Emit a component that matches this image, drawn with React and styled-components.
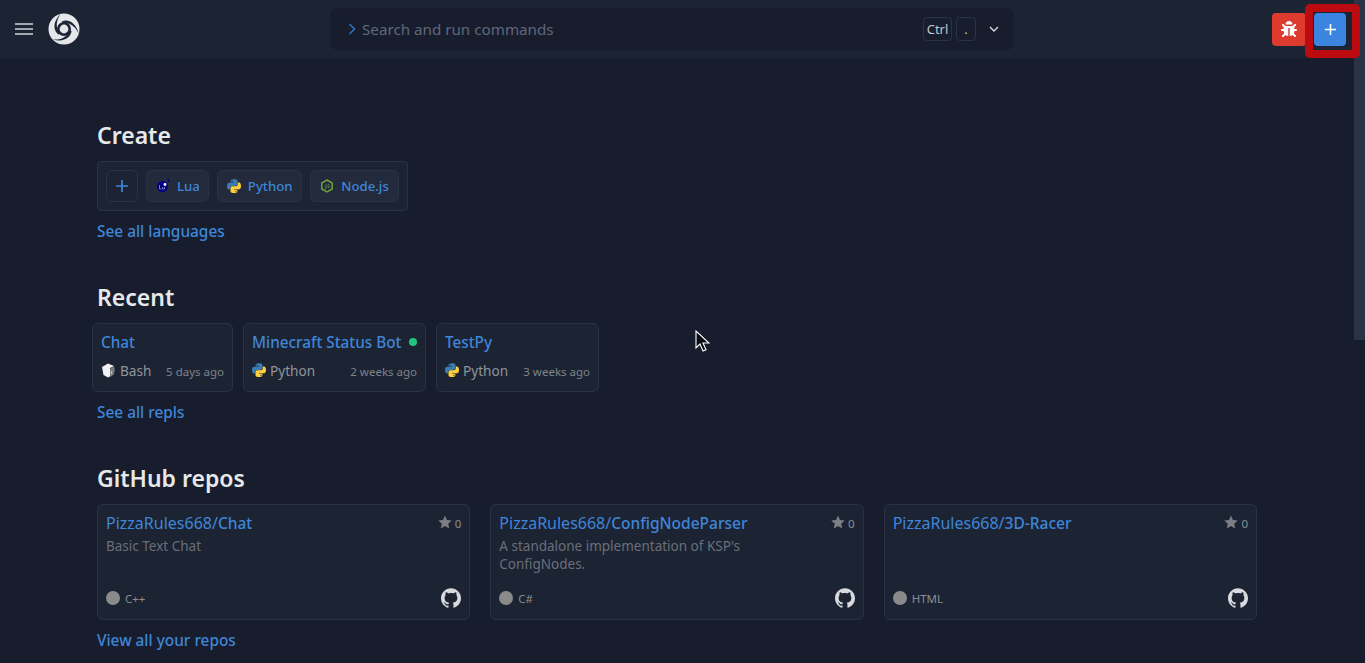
import React from "react";
import styled, { createGlobalStyle } from "styled-components";
import { FaBug } from "react-icons/fa";
import { SiGithub } from "react-icons/si";

const Global = createGlobalStyle`
  html, body { margin: 0; padding: 0; background: #171d2d; height: 663px; overflow: hidden; }
  body { font-family: "Noto Sans", "Open Sans", sans-serif; color: #f5f9fc; }
  a { text-decoration: none; }
`;

const Page = styled.div`
  position: relative;
  width: 1365px;
  height: 663px;
  overflow: hidden;
`;
const Header = styled.header`
  width: 1354px;
  height: 58px;
  background: #1c2333;
  display: grid;
  grid-template-columns: 315px 684px 1fr;
  align-items: center;
  box-sizing: border-box;
  padding: 0 8px 0 15px;
`;
const HeaderLeft = styled.div`
  display: flex;
  align-items: center;
  gap: 15px;
`;
const HeaderRight = styled.div`
  display: flex;
  justify-content: flex-end;
  align-items: center;
  gap: 8px;
`;
const Burger = styled.svg`
  width: 18px;
  height: 12px;
  display: block;
`;
const Search = styled.div`
  height: 42px;
  background: #171d2d;
  border-radius: 8px;
  display: flex;
  align-items: center;
  padding: 0 12px 0 18px;
`;
const Placeholder = styled.span`
  flex: 1;
  margin-left: 6px;
  font-size: 15.2px;
  color: #5f677a;
`;
const Key = styled.span`
  height: 24px;
  width: ${(p) => p.$w}px;
  box-sizing: border-box;
  display: flex;
  align-items: center;
  justify-content: center;
  border: 1px solid #2b3245;
  border-radius: 4px;
  font-size: 13px;
  color: #c2c8cc;
  margin-right: 4px;
`;
const KeyChevron = styled.svg`
  width: 12px;
  height: 12px;
  margin-left: 8px;
  margin-right: 2px;
`;
const ActionButton = styled.button`
  width: ${(p) => p.$w}px;
  height: 33px;
  border: 0;
  padding: 0;
  border-radius: 4px;
  background: ${(p) => p.$bg};
  color: #fff;
  display: flex;
  align-items: center;
  justify-content: center;
`;

const Main = styled.main`
  width: 1160px;
  margin: 0 auto;
  position: relative;
  left: -5.5px;
  padding-top: 62px;
`;
const Section = styled.section`
  margin-bottom: ${(p) => p.$mb}px;
`;
const Title = styled.h2`
  margin: 0 0 10px;
  font-size: 23px;
  line-height: 31px;
  font-weight: 600;
  color: #e6e8ea;
`;
const LinkLine = styled.a`
  display: block;
  margin-top: 10px;
  font-size: 15.4px;
  line-height: 21px;
  font-weight: 500;
  color: #3f86d8;
`;
const CreatePanel = styled.div`
  display: inline-flex;
  align-items: center;
  gap: 8px;
  height: 50px;
  box-sizing: border-box;
  padding: 0 8px;
  background: #1c2333;
  border: 1px solid #2b3245;
  border-radius: 4px;
  vertical-align: top;
`;
const CreateRow = styled.div`
  height: 50px;
`;
const Chip = styled.button`
  height: 32px;
  box-sizing: border-box;
  padding: 0 ${(p) => (p.$square ? 0 : 8)}px 0 ${(p) => (p.$square ? 0 : 9)}px;
  width: ${(p) => (p.$w ? `${p.$w}px` : "auto")};
  background: ${(p) => (p.$square ? "transparent" : "#232a3b")};
  border: 1px solid #2b3245;
  border-radius: 6px;
  display: flex;
  align-items: center;
  justify-content: center;
  gap: 7px;
  color: #3f86d8;
  font-family: inherit;
  font-size: 13.2px;
  font-weight: 500;
`;
const RecentRow = styled.div`
  display: flex;
  gap: 10px;
  margin-left: -5px;
`;
const ReplCard = styled.div`
  width: ${(p) => p.$w}px;
  height: 69px;
  box-sizing: border-box;
  padding: 7px 8px 0;
  background: #1c2333;
  border: 1px solid #2b3245;
  border-radius: 6px;
`;
const ReplTop = styled.div`
  display: flex;
  align-items: center;
  justify-content: space-between;
  height: 21px;
`;
const ReplName = styled.a`
  font-size: 15.3px;
  font-weight: 500;
  color: #3f86d8;
  white-space: nowrap;
`;
const Dot = styled.span`
  width: 8px;
  height: 8px;
  border-radius: 50%;
  background: #1fc77e;
`;
const ReplBottom = styled.div`
  display: flex;
  align-items: center;
  margin-top: 8px;
  height: 20px;
`;
const Lang = styled.span`
  font-size: 13.6px;
  color: #8f949a;
  margin-left: 4px;
  flex: 1;
  white-space: nowrap;
`;
const Ago = styled.span`
  font-size: 11.5px;
  color: #7f8489;
  white-space: nowrap;
  padding-top: 3px;
`;
const RepoGrid = styled.div`
  display: grid;
  grid-template-columns: repeat(3, 1fr);
  gap: 20px;
`;
const RepoCard = styled.div`
  height: 116px;
  box-sizing: border-box;
  padding: 8px;
  background: #1c2333;
  border: 1px solid #2b3245;
  border-radius: 6px;
  display: flex;
  flex-direction: column;
`;
const RepoTop = styled.div`
  display: flex;
  justify-content: space-between;
  align-items: center;
  height: 20px;
`;
const RepoName = styled.a`
  font-size: 16px;
  color: #3f86d8;
  white-space: nowrap;
  b { font-size: 15.5px; font-weight: 500; }
`;
const Stars = styled.span`
  display: flex;
  align-items: center;
  gap: 3px;
  font-size: 11.5px;
  color: #8a8f94;
  svg { margin-top: -2px; }
`;
const Desc = styled.p`
  margin: 4px 0 0;
  width: 290px;
  flex: 1;
  font-size: 13.5px;
  line-height: 18px;
  color: #6a6f78;
`;
const RepoBottom = styled.div`
  display: flex;
  justify-content: space-between;
  align-items: center;
  height: 20px;
  margin-bottom: 3px;
`;
const RepoLang = styled.span`
  display: flex;
  align-items: center;
  gap: 5px;
  font-size: 11.5px;
  color: #8a8f94;
`;
const LangDot = styled.span`
  width: 14px;
  height: 14px;
  border-radius: 50%;
  background: #8a8a8a;
`;
const ScrollThumb = styled.div`
  position: absolute;
  top: 0;
  right: 0;
  width: 11px;
  height: 340px;
  background: #2b3245;
`;
const Annotation = styled.div`
  position: absolute;
  left: 1305px;
  top: 4px;
  width: 55px;
  height: 54px;
  box-sizing: border-box;
  border: 8px solid #bb0a10;
  border-radius: 5px;
`;
const Cursor = styled.svg`
  position: absolute;
  left: 695px;
  top: 330px;
  width: 15px;
  height: 23px;
`;

const Plus = ({ size = 14, color = "currentColor" }) => (
  <svg width={size} height={size} viewBox="0 0 14 14" fill="none" stroke={color} strokeWidth="1.7">
    <path d="M7 1v12M1 7h12" />
  </svg>
);
const Logo = () => (
  <svg width="32" height="32" viewBox="0 0 32 32">
    <circle cx="16" cy="16" r="15.5" fill="#e4e6e9" />
    <circle cx="16" cy="16" r="7" fill="#1c2333" />
    {[0, 120, 240].map((a) => (
      <path
        key={a}
        transform={`rotate(${a} 16 16)`}
        d="M14 8.4C20 5.8 28 9.5 30.6 20.5C27 12.5 21 9.6 14 9.6Z"
        fill="#1c2333"
      />
    ))}
    <circle cx="16" cy="16" r="4.4" fill="#e4e6e9" />
  </svg>
);
const PyIcon = ({ size = 14 }) => (
  <svg width={size} height={size} viewBox="0 0 110 110">
    <path
      fill="#3d7cb0"
      d="M54.9 1c-28 0-26.2 12.1-26.2 12.1l0 12.6h26.7v3.8H18.1S0 27.4 0 55.9s15.8 27.5 15.8 27.5h9.4V70.2s-.5-15.8 15.5-15.8h26.7s15 .2 15-14.5V15.6S84.7 1 54.9 1zM40 9.5a4.8 4.8 0 1 1 0 9.6 4.8 4.8 0 0 1 0-9.6z"
    />
    <path
      fill="#fdd13d"
      transform="rotate(180 55 55.5)"
      d="M54.9 1c-28 0-26.2 12.1-26.2 12.1l0 12.6h26.7v3.8H18.1S0 27.4 0 55.9s15.8 27.5 15.8 27.5h9.4V70.2s-.5-15.8 15.5-15.8h26.7s15 .2 15-14.5V15.6S84.7 1 54.9 1zM40 9.5a4.8 4.8 0 1 1 0 9.6 4.8 4.8 0 0 1 0-9.6z"
    />
  </svg>
);
const LuaIcon = () => (
  <svg width="14" height="14" viewBox="0 0 14 14">
    <circle cx="6.5" cy="7.5" r="5.5" fill="#000080" />
    <circle cx="9" cy="5.5" r="1.4" fill="#fff" />
    <circle cx="12.5" cy="1.5" r="1.2" fill="#000080" />
    <path d="M3.5 6v4h2M6.5 8v2h2V8" fill="none" stroke="#aab" strokeWidth=".7" />
  </svg>
);
const NodeIcon = () => (
  <svg width="14" height="14" viewBox="0 0 14 14">
    <path d="M7 1l5.2 3v6L7 13l-5.2-3V4z" fill="none" stroke="#6da13f" strokeWidth="1.5" />
    <path d="M6 5.5v3.6c0 .8-1 .8-1.3.3M9.4 6c-.5-.6-1.7-.5-1.7.3s1.8.6 1.8 1.5-1.4 1-2 .3" fill="none" stroke="#6da13f" strokeWidth=".8" />
  </svg>
);
const BashIcon = () => (
  <svg width="15" height="15" viewBox="0 0 15 15">
    <path d="M1 4l6-3.5L13 3v8l-6 3.5L2.5 12z" fill="#f2f2f2" />
    <path d="M9 5l4-2v8l-4 3z" fill="#3a3f4a" />
    <path d="M13 3.5c1.3 2.5 1 6-1 8.5l-3 2V6z" fill="#c8c9cc" opacity=".45" />
    <path d="M10.4 8v3" stroke="#ddd" strokeWidth=".7" />
  </svg>
);
const StarIcon = () => (
  <svg width="14" height="14" viewBox="0 0 24 24" fill="#7c7f86">
    <path d="M12 1l3.4 7.5 8.1.9-6 5.5 1.7 8.1L12 18.9l-7.2 4.1 1.7-8.1-6-5.5 8.1-.9z" />
  </svg>
);

const repls = [
  { name: "Chat", lang: "Bash", ago: "5 days ago", w: 141, icon: <BashIcon /> },
  { name: "Minecraft Status Bot", lang: "Python", ago: "2 weeks ago", w: 183, live: true, icon: <PyIcon /> },
  { name: "TestPy", lang: "Python", ago: "3 weeks ago", w: 163, icon: <PyIcon /> },
];
const repos = [
  { name: "Chat", desc: "Basic Text Chat", lang: "C++" },
  { name: "ConfigNodeParser", desc: "A standalone implementation of KSP's ConfigNodes.", lang: "C#" },
  { name: "3D-Racer", desc: "", lang: "HTML" },
];

export default function App() {
  return (
    <Page>
      <Global />
      <Header>
        <HeaderLeft>
          <Burger viewBox="0 0 18 12" fill="#a3a7b0">
            <rect y="0" width="18" height="2" />
            <rect y="5" width="18" height="2" />
            <rect y="10" width="18" height="2" />
          </Burger>
          <Logo />
        </HeaderLeft>
        <Search>
          <svg width="8" height="12" viewBox="0 0 8 12" fill="none" stroke="#2f6fc0" strokeWidth="1.6">
            <path d="M1.5 1l5 5-5 5" />
          </svg>
          <Placeholder>Search and run commands</Placeholder>
          <Key $w={29}>Ctrl</Key>
          <Key $w={20}>.</Key>
          <KeyChevron viewBox="0 0 12 12" fill="none" stroke="#d5d8dc" strokeWidth="1.4">
            <path d="M2 4l4 4 4-4" />
          </KeyChevron>
        </Search>
        <HeaderRight>
          <ActionButton $w={34} $bg="#dc3b2e">
            <FaBug size={16} />
          </ActionButton>
          <ActionButton $w={32} $bg="#3b84e0">
            <Plus size={13} color="#fff" />
          </ActionButton>
        </HeaderRight>
      </Header>

      <Main>
        <Section $mb={40}>
          <Title>Create</Title>
          <CreateRow>
            <CreatePanel>
              <Chip $square $w={32}>
                <Plus />
              </Chip>
              <Chip>
                <LuaIcon />
                Lua
              </Chip>
              <Chip>
                <PyIcon />
                Python
              </Chip>
              <Chip $w={89}>
                <NodeIcon />
                Node.js
              </Chip>
            </CreatePanel>
          </CreateRow>
          <LinkLine>See all languages</LinkLine>
        </Section>

        <Section $mb={40}>
          <Title>Recent</Title>
          <RecentRow>
            {repls.map((r) => (
              <ReplCard key={r.name} $w={r.w}>
                <ReplTop>
                  <ReplName>{r.name}</ReplName>
                  {r.live && <Dot />}
                </ReplTop>
                <ReplBottom>
                  {r.icon}
                  <Lang>{r.lang}</Lang>
                  <Ago>{r.ago}</Ago>
                </ReplBottom>
              </ReplCard>
            ))}
          </RecentRow>
          <LinkLine>See all repls</LinkLine>
        </Section>

        <Section $mb={0}>
          <Title>GitHub repos</Title>
          <RepoGrid>
            {repos.map((r) => (
              <RepoCard key={r.name}>
                <RepoTop>
                  <RepoName>
                    PizzaRules668/<b>{r.name}</b>
                  </RepoName>
                  <Stars>
                    <StarIcon />0
                  </Stars>
                </RepoTop>
                <Desc>{r.desc}</Desc>
                <RepoBottom>
                  <RepoLang>
                    <LangDot />
                    {r.lang}
                  </RepoLang>
                  <SiGithub size={20} color="#d8dade" />
                </RepoBottom>
              </RepoCard>
            ))}
          </RepoGrid>
          <LinkLine>View all your repos</LinkLine>
        </Section>
      </Main>

      <ScrollThumb />
      <Annotation />
      <Cursor viewBox="0 0 15 23">
        <path d="M1 1v17l4-4 3 7 3-1.2-3-6.8h6z" fill="#0b0d12" stroke="#fff" strokeWidth="1.1" />
      </Cursor>
    </Page>
  );
}
